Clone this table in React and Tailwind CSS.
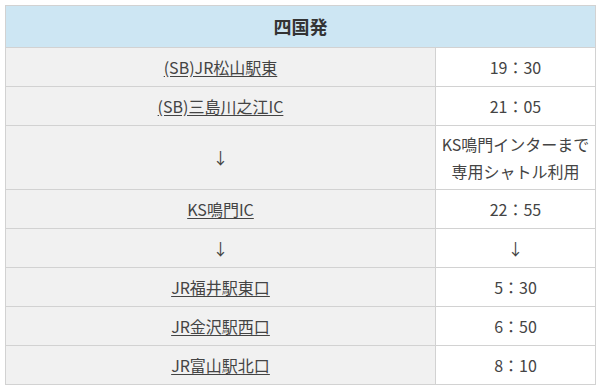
import React from 'react';

const rows = [
  { place: '(SB)JR松山駅東', link: true, time: ['19：30'], h: 'h-[39px]' },
  { place: '(SB)三島川之江IC', link: true, time: ['21：05'], h: 'h-[39px]' },
  { place: '↓', link: false, time: ['KS鳴門インターまで', '専用シャトル利用'], h: 'h-[64px]' },
  { place: 'KS鳴門IC', link: true, time: ['22：55'], h: 'h-[39px]' },
  { place: '↓', link: false, time: ['↓'], h: 'h-[39px]' },
  { place: 'JR福井駅東口', link: true, time: ['5：30'], h: 'h-[39px]' },
  { place: 'JR金沢駅西口', link: true, time: ['6：50'], h: 'h-[39px]' },
  { place: 'JR富山駅北口', link: true, time: ['8：10'], h: 'h-[39px]' },
];

export default function App() {
  return (
    <div className="w-[600px] h-[387px] bg-white pt-[5px] pl-[5px] font-['Noto_Sans_CJK_JP','Noto_Sans',sans-serif] text-[#444]">
      <table className="w-[591px] border-collapse table-fixed">
        <colgroup>
          <col className="w-[430px]" />
          <col />
        </colgroup>
        <thead>
          <tr className="h-[42px]">
            <th colSpan={2} className="border border-[#d2d2d2] bg-[#cde6f3] text-[18px] font-bold text-[#333] text-center">
              四国発
            </th>
          </tr>
        </thead>
        <tbody>
          {rows.map((r, i) => (
            <tr key={i} className={r.h}>
              <td className="border border-[#d2d2d2] bg-[#f1f1f1] text-center text-[16px] leading-[27px]">
                {r.link ? <a href="#" className="underline underline-offset-2">{r.place}</a> : r.place}
              </td>
              <td className="border border-[#d2d2d2] bg-white text-center text-[16px] leading-[27px]">
                {r.time.map((t, j) => <div key={j}>{t}</div>)}
              </td>
            </tr>
          ))}
        </tbody>
      </table>
    </div>
  );
}
